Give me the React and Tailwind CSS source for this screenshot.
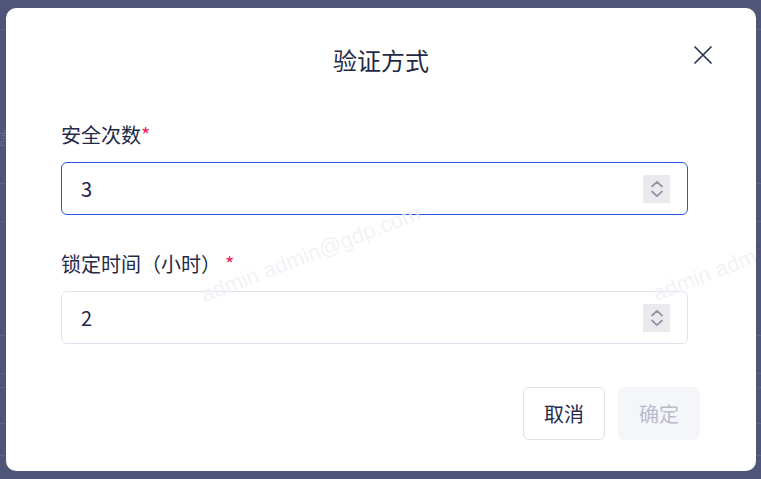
import React from "react";

const font = { fontFamily: '"Noto Sans CJK SC", "Noto Sans", sans-serif' };

function Spinner() {
  return (
    <div className="flex h-[28px] w-[27px] flex-col items-center justify-center gap-[2px] bg-[#e9e9ee]">
      <svg width="14" height="8" viewBox="0 0 14 8" fill="none">
        <path d="M2 6.5 L7 1.8 L12 6.5" stroke="#9495a5" strokeWidth="1.8" strokeLinecap="round" strokeLinejoin="round" />
      </svg>
      <svg width="14" height="8" viewBox="0 0 14 8" fill="none">
        <path d="M2 1.5 L7 6.2 L12 1.5" stroke="#9495a5" strokeWidth="1.8" strokeLinecap="round" strokeLinejoin="round" />
      </svg>
    </div>
  );
}

function NumberInput({ value, focused }) {
  return (
    <div
      className={
        "flex h-[53px] w-[627px] items-center justify-between rounded-[6px] border bg-white pl-[19px] pr-[17px] " +
        (focused ? "border-[#2456e6]" : "border-[#dfe2ec]")
      }
    >
      <span className="text-[20px] leading-none text-[#1d2747]">{value}</span>
      <Spinner />
    </div>
  );
}

function Watermark({ left, top }) {
  return (
    <span
      className="pointer-events-none absolute origin-bottom-left -rotate-[21deg] whitespace-nowrap text-[22px] leading-none text-[#eff1f5]/90"
      style={{ left, top, fontFamily: '"Liberation Sans", Arial, sans-serif' }}
    >
      admin admin@gdp.com
    </span>
  );
}

export default function App() {
  const rows = [29, 183, 221, 335, 373, 387, 423, 455];
  return (
    <div className="relative h-[479px] w-[761px] overflow-hidden bg-[#4e5577]" style={font}>
      {/* page behind overlay */}
      <div className="pointer-events-none absolute inset-0">
        {rows.map((y) => (
          <div key={y} className="absolute left-0 h-px w-[761px] bg-[#5c6385]" style={{ top: y }} />
        ))}
        <span className="absolute left-[-6px] top-[128px] text-[18px] leading-none text-[#626a8c]">信</span>
      </div>

      {/* modal */}
      <div className="absolute left-[6px] top-[8px] flex h-[463px] w-[750px] flex-col overflow-hidden rounded-[10px] bg-white">
        <div className="relative flex h-[104px] shrink-0 items-center justify-center">
          <h2 className="text-[24px] leading-none text-[#1f2948]">验证方式</h2>
          <button className="absolute left-[688px] top-[38px] flex h-[18px] w-[18px] items-center justify-center">
            <svg width="18" height="18" viewBox="0 0 18 18" fill="none">
              <path d="M1 1 L17 17 M17 1 L1 17" stroke="#2a3354" strokeWidth="1.7" strokeLinecap="round" />
            </svg>
          </button>
        </div>

        <div className="flex flex-col pl-[55px] pt-[8px]">
          <label className="h-[30px] text-[20px] leading-[30px] text-[#1f2948]">
            安全次数<span className="text-[#f0245a]">*</span>
          </label>
          <div className="mt-[12px]">
            <NumberInput value="3" focused />
          </div>

          <label className="mt-[34px] h-[30px] text-[20px] leading-[30px] text-[#1f2948]">
            锁定时间（小时）<span className="ml-[4px] text-[#f0245a]">*</span>
          </label>
          <div className="mt-[12px]">
            <NumberInput value="2" />
          </div>
        </div>

        <div className="mt-[43px] flex justify-end gap-[13px] pr-[56px]">
          <button className="flex h-[53px] w-[82px] items-center justify-center rounded-[6px] border border-[#dde1ea] bg-white text-[20px] leading-none text-[#1f2948]">
            取消
          </button>
          <button className="flex h-[53px] w-[82px] items-center justify-center rounded-[6px] bg-[#f5f6fa] text-[20px] leading-none text-[#b8bccb]">
            确定
          </button>
        </div>

        <Watermark left={200} top={276} />
        <Watermark left={652} top={275} />
      </div>
    </div>
  );
}
